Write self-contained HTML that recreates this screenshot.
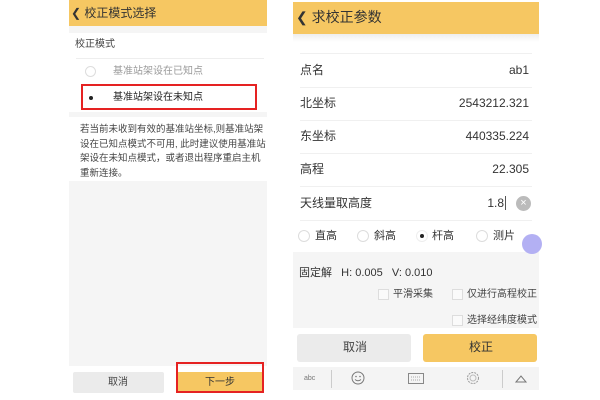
<!DOCTYPE html>
<html><head><meta charset="utf-8"><style>
*{margin:0;padding:0;box-sizing:border-box}
body{width:600px;height:400px;background:#fff;position:relative;overflow:hidden;font-family:"Liberation Sans","Noto Sans CJK SC",sans-serif;color:#333}
.a{position:absolute}
.t{position:absolute;white-space:nowrap;line-height:1}
</style></head><body>
<!-- LEFT PANEL -->
<div class="a" style="left:69px;top:0;width:198px;height:400px;background:#f5f5f5"></div>
<div class="a" style="left:69px;top:0;width:198px;height:26px;background:#f6c762"></div>
<div class="t" style="left:71px;top:7px;font-size:12px;color:#333">&#10094; 校正模式选择</div>
<div class="a" style="left:69px;top:33px;width:198px;height:79px;background:#fff"></div>
<div class="t" style="left:75px;top:40px;font-size:10px;color:#444">校正模式</div>
<div class="a" style="left:76px;top:58px;width:188px;height:1px;background:#eee"></div>
<div class="a" style="left:85px;top:66px;width:11px;height:11px;border:1px solid #ddd;border-radius:50%"></div>
<div class="t" style="left:113px;top:67px;font-size:10px;color:#999">基准站架设在已知点</div>
<div class="a" style="left:89px;top:96px;width:4px;height:4px;background:#222;border-radius:50%"></div>
<div class="t" style="left:113px;top:93px;font-size:10px;color:#222">基准站架设在未知点</div>
<div class="a" style="left:81px;top:84px;width:176px;height:26px;border:2px solid #e52222"></div>
<div class="a" style="left:69px;top:117px;width:198px;height:64px;background:#fff"></div>
<div class="t" style="left:80px;top:123px;font-size:9.5px;color:#444;line-height:14.5px">若当前未收到有效的基准站坐标,则基准站架<br>设在已知点模式不可用, 此时建议使用基准站<br>架设在未知点模式，或者退出程序重启主机<br>重新连接。</div>
<div class="a" style="left:69px;top:366px;width:198px;height:34px;background:#fff"></div>
<div class="a" style="left:73px;top:372px;width:91px;height:21px;background:#ebebeb;border-radius:2px"></div>
<div class="t" style="left:108px;top:378px;font-size:10px;color:#444">取消</div>
<div class="a" style="left:176px;top:372px;width:86px;height:21px;background:#f6c762"></div>
<div class="t" style="left:205px;top:378px;font-size:10px;color:#333">下一步</div>
<div class="a" style="left:176px;top:362px;width:88px;height:31px;border:2px solid #e52222"></div>

<!-- RIGHT PANEL -->
<div class="a" style="left:293px;top:0;width:246px;height:400px;background:#fff"></div>
<div class="a" style="left:293px;top:2px;width:246px;height:32px;background:#f6c762"></div>
<div class="t" style="left:296px;top:10px;font-size:14px;color:#333">&#10094; 求校正参数</div>
<div class="a" style="left:293px;top:34px;width:246px;height:8px;background:linear-gradient(#eee,#fff)"></div>
<div class="a" style="left:300px;top:53px;width:232px;height:1px;background:#f0f0f0"></div>
<div class="t" style="left:300px;top:64px;font-size:12px">点名</div><div class="t" style="right:71px;top:64px;font-size:12px">ab1</div>
<div class="a" style="left:300px;top:87px;width:232px;height:1px;background:#f0f0f0"></div>
<div class="t" style="left:300px;top:97px;font-size:12px">北坐标</div><div class="t" style="right:71px;top:97px;font-size:12px">2543212.321</div>
<div class="a" style="left:300px;top:120px;width:232px;height:1px;background:#f0f0f0"></div>
<div class="t" style="left:300px;top:130px;font-size:12px">东坐标</div><div class="t" style="right:71px;top:130px;font-size:12px">440335.224</div>
<div class="a" style="left:300px;top:153px;width:232px;height:1px;background:#f0f0f0"></div>
<div class="t" style="left:300px;top:163px;font-size:12px">高程</div><div class="t" style="right:71px;top:163px;font-size:12px">22.305</div>
<div class="a" style="left:300px;top:186px;width:232px;height:1px;background:#f0f0f0"></div>
<div class="t" style="left:300px;top:197px;font-size:12px">天线量取高度</div><div class="t" style="right:96px;top:197px;font-size:12px">1.8</div>
<div class="a" style="left:505px;top:196px;width:1px;height:14px;background:#555"></div>
<div class="a" style="left:516px;top:196px;width:15px;height:15px;background:#bbb;border-radius:50%;color:#fff;font-size:11px;text-align:center;line-height:15px">×</div>
<div class="a" style="left:300px;top:220px;width:232px;height:1px;background:#f0f0f0"></div>
<div class="a" style="left:298px;top:230px;width:12px;height:12px;border:1px solid #ddd;border-radius:50%"></div>
<div class="t" style="left:315px;top:231px;font-size:11px">直高</div>
<div class="a" style="left:357px;top:230px;width:12px;height:12px;border:1px solid #ddd;border-radius:50%"></div>
<div class="t" style="left:374px;top:231px;font-size:11px">斜高</div>
<div class="a" style="left:416px;top:230px;width:12px;height:12px;border:1px solid #eee;border-radius:50%"></div>
<div class="a" style="left:420px;top:234px;width:4px;height:4px;background:#222;border-radius:50%"></div>
<div class="t" style="left:432px;top:231px;font-size:11px">杆高</div>
<div class="a" style="left:476px;top:230px;width:12px;height:12px;border:1px solid #ddd;border-radius:50%"></div>
<div class="t" style="left:493px;top:231px;font-size:11px">测片</div>
<div class="a" style="left:293px;top:252px;width:246px;height:76px;background:#f5f5f5"></div>
<div class="a" style="left:522px;top:234px;width:20px;height:20px;background:#b3b0f3;border-radius:50%"></div>
<div class="t" style="left:299px;top:268px;font-size:11px;color:#333">固定解&nbsp;&nbsp; H: 0.005&nbsp;&nbsp; V: 0.010</div>
<div class="a" style="left:378px;top:289px;width:11px;height:11px;border:1px solid #ddd;background:#fafafa"></div>
<div class="t" style="left:393px;top:290px;font-size:10px;color:#444">平滑采集</div>
<div class="a" style="left:452px;top:289px;width:11px;height:11px;border:1px solid #ddd;background:#fafafa"></div>
<div class="t" style="left:467px;top:290px;font-size:10px;color:#444">仅进行高程校正</div>
<div class="a" style="left:452px;top:315px;width:11px;height:11px;border:1px solid #ddd;background:#fafafa"></div>
<div class="t" style="left:467px;top:316px;font-size:10px;color:#444">选择经纬度模式</div>
<div class="a" style="left:297px;top:334px;width:114px;height:28px;background:#ebebeb;border-radius:3px"></div>
<div class="t" style="left:343px;top:341px;font-size:12px;color:#444">取消</div>
<div class="a" style="left:423px;top:334px;width:114px;height:28px;background:#f6c762;border-radius:3px"></div>
<div class="t" style="left:469px;top:341px;font-size:12px;color:#333">校正</div>
<div class="a" style="left:293px;top:367px;width:246px;height:23px;background:#f4f4f4"></div>
<div class="t" style="left:304px;top:375px;font-size:7px;color:#777">abc</div>
<div class="a" style="left:331px;top:370px;width:1px;height:18px;background:#ccc"></div>
<svg class="a" style="left:351px;top:371px" width="14" height="14"><circle cx="7" cy="7" r="6" fill="none" stroke="#777"/><circle cx="5" cy="5.5" r=".8" fill="#777"/><circle cx="9" cy="5.5" r=".8" fill="#777"/><path d="M4 8.5Q7 11 10 8.5" fill="none" stroke="#777"/></svg>
<svg class="a" style="left:408px;top:373px" width="16" height="11"><rect x=".5" y=".5" width="15" height="10" fill="none" stroke="#888"/><path d="M3 4h10M3 7h10" stroke="#aaa" stroke-dasharray="1 1"/></svg>
<svg class="a" style="left:466px;top:371px" width="14" height="14"><circle cx="7" cy="7" r="5.5" fill="none" stroke="#999" stroke-dasharray="2 1"/><circle cx="7" cy="7" r="3" fill="none" stroke="#bbb"/></svg>
<div class="a" style="left:502px;top:370px;width:1px;height:18px;background:#ccc"></div>
<svg class="a" style="left:515px;top:375px" width="12" height="8"><path d="M1 7L6 1L11 7Z" fill="none" stroke="#777"/></svg>
</body></html>
